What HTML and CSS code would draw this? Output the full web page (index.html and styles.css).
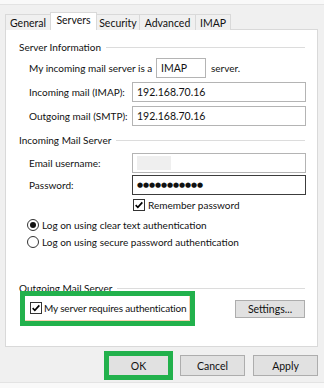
FILE: index.html
```html
<!DOCTYPE html>
<html>
<head>
<meta charset="utf-8">
<link rel="stylesheet" href="styles.css">
</head>
<body>
<div class="dialog">
  <div class="topstrip"></div>
  <div class="tabs">
    <div class="tab t-general">General</div>
    <div class="tab active t-servers">Servers</div>
    <div class="tab t-security">Security</div>
    <div class="tab t-advanced">Advanced</div>
    <div class="tab t-imap">IMAP</div>
  </div>
  <div class="panel">
    <div class="group-head"><span>Server Information</span><i class="rule"></i></div>
    <div class="row r1">
      <span class="lbl-wide">My incoming mail server is a</span>
      <span class="box small">IMAP</span>
      <span class="after">server.</span>
    </div>
    <div class="row r2">
      <span class="lbl">Incoming mail (IMAP):</span>
      <span class="box grow">192.168.70.16</span>
    </div>
    <div class="row r3">
      <span class="lbl">Outgoing mail (SMTP):</span>
      <span class="box grow">192.168.70.16</span>
    </div>

    <div class="group-head g2"><span>Incoming Mail Server</span><i class="rule"></i></div>
    <div class="row r4">
      <span class="lbl">Email username:</span>
      <span class="box grow"><span class="blur"></span></span>
    </div>
    <div class="row r5">
      <span class="lbl">Password:</span>
      <span class="box grow focus"><span class="dots">●●●●●●●●●●●</span></span>
    </div>
    <div class="check-row remember">
      <span class="cb"><svg viewBox="0 0 12 12" width="10" height="10"><path d="M2 6.2 L4.6 8.8 L10 2.8" fill="none" stroke="#000" stroke-width="2"/></svg></span>
      <span>Remember password</span>
    </div>
    <div class="radio-row ra1">
      <span class="radio on"></span>
      <span>Log on using clear text authentication</span>
    </div>
    <div class="radio-row ra2">
      <span class="radio"></span>
      <span>Log on using secure password authentication</span>
    </div>

    <div class="group-head g3"><span>Outgoing Mail Server</span><i class="rule"></i></div>
    <div class="auth-row">
      <div class="auth highlight">
        <span class="cb"><svg viewBox="0 0 12 12" width="10" height="10"><path d="M2 6.2 L4.6 8.8 L10 2.8" fill="none" stroke="#000" stroke-width="2"/></svg></span>
        <span class="auth-text">My server requires authentication</span>
      </div>
      <div class="btn settings">Settings...</div>
    </div>
  </div>
  <div class="buttons">
    <div class="btn ok highlight">OK</div>
    <div class="btn">Cancel</div>
    <div class="btn">Apply</div>
  </div>
  <div class="bottomstrip"></div>
</div>
</body>
</html>
```
FILE: styles.css
```css
* { box-sizing: border-box; }
html, body { margin: 0; padding: 0; }
body {
  width: 324px;
  height: 388px;
  background: #f0f0f0;
  font-family: "Lato", "Liberation Sans", sans-serif;
  font-size: 10px;
  color: #111;
  overflow: hidden;
  white-space: nowrap;
}
.dialog { width: 324px; height: 388px; display: flex; flex-direction: column; }
.topstrip { height: 5px; background: #f9f9f9; border-bottom: 1px solid #e3e3e3; }
.tabs {
  display: flex;
  align-items: flex-end;
  height: 25px;
  padding-top: 7px;
  padding-left: 5px;
  margin-bottom: -1px;
  position: relative;
  z-index: 1;
}
.tab {
  height: 16px;
  border: 1px solid #d9d9d9;
  border-bottom: none;
  background: #f0f0f0;
  display: flex;
  align-items: center;
  justify-content: center;
  margin-right: -1px;
  line-height: 14px;
  font-size: 10.5px;
}
.tab.active {
  height: 18px;
  background: #fff;
  padding-bottom: 3px;
  position: relative;
  z-index: 2;
}
.t-general { width: 46px; }
.t-servers { width: 47px; }
.t-security { width: 44px; }
.t-advanced { width: 57px; }
.t-imap { width: 36px; }

.panel {
  margin-left: 5px;
  width: 313px;
  height: 318px;
  background: #fff;
  border: 1px solid #d9d9d9;
  padding: 10px 11px 0 13px;
}
.group-head {
  display: flex;
  align-items: center;
  height: 14px;
  line-height: 14px;
}
.group-head .rule {
  flex: 1;
  height: 1px;
  background: #dcdcdc;
  margin-left: 5px;
  margin-right: 1px;
}
.row {
  display: flex;
  align-items: center;
  height: 20px;
  padding-left: 10px;
}
.r1 { margin-top: 4px; }
.r2, .r3 { margin-top: 4px; }
.g2 { margin-top: 7px; }
.r4 { margin-top: 6px; }
.r5 { margin-top: 2px; }
.lbl-wide { width: 127px; }
.lbl { width: 103px; }
.box {
  height: 20px;
  border: 1px solid #b4b4b4;
  background: #fff;
  display: flex;
  align-items: center;
  padding-left: 4px;
  font-size: 10.5px;
}
.box.small { width: 50px; }
.box.grow { flex: 1; }
.box.focus { border-color: #3c3c3c; }
.after { margin-left: 5px; }
.blur { width: 34px; height: 14px; background: #efefef; }
.dots {
  font-family: "DejaVu Sans", sans-serif;
  font-size: 7px;
  letter-spacing: -0.1px;
}
.check-row, .radio-row {
  display: flex;
  align-items: center;
  height: 14px;
}
.remember { margin-top: 3px; padding-left: 114px; }
.cb {
  width: 12px;
  height: 12px;
  border: 1px solid #333;
  background: #fff;
  display: inline-flex;
  align-items: center;
  justify-content: center;
  margin-right: 3px;
  flex: none;
}
.radio-row { padding-left: 8px; }
.ra1 { margin-top: 6px; }
.ra2 { margin-top: 3px; }
.radio {
  width: 12px;
  height: 12px;
  border: 1px solid #333;
  border-radius: 50%;
  background: #fff;
  margin-right: 3px;
  display: inline-flex;
  align-items: center;
  justify-content: center;
  flex: none;
}
.radio.on::after {
  content: "";
  width: 6px;
  height: 6px;
  border-radius: 50%;
  background: #111;
}
.g3 { margin-top: 32px; }
.auth-row {
  display: flex;
  align-items: center;
  justify-content: space-between;
  margin-top: 1px;
  height: 25px;
  padding-left: 6px;
  padding-right: 1px;
}
.auth {
  display: flex;
  align-items: center;
  height: 25px;
  width: 165px;
  padding-left: 5px;
  background: #fff;
  border-right: 1px solid #f6d2b0;
  border-bottom: 1px solid #f6d2b0;
}
.auth .cb { margin-right: 2px; }
.auth-text { font-size: 10px; letter-spacing: -0.15px; }
.highlight { outline: 5px solid #22b14c; }
.btn {
  height: 21px;
  width: 65px;
  background: #e1e1e1;
  border: 1px solid #adadad;
  display: flex;
  align-items: center;
  justify-content: center;
  font-size: 10.5px;
}
.settings { width: 70px; height: 18px; }
.buttons {
  display: flex;
  justify-content: flex-end;
  gap: 8px;
  padding-right: 6px;
  margin-top: 8px;
}
.btn.ok { width: 61px; margin-right: 3px; outline-offset: -1px; border-color: #e1e1e1; }
.bottomstrip { margin-top: auto; height: 6px; background: #f9f9f9; border-top: 1px solid #e3e3e3; }
```
